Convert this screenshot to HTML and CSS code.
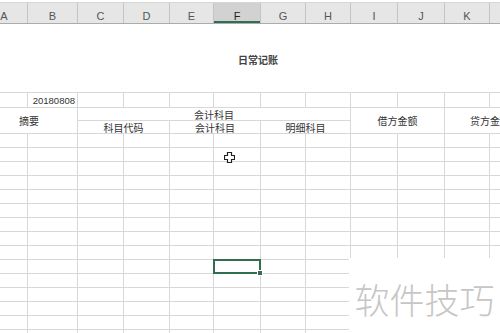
FILE: index.html
```html
<!DOCTYPE html>
<html>

<head>
    <title>日常记账</title>
    <link rel="stylesheet" href="styles.css">
</head>

<body>
    <div class="topbar"></div>

    <div class="workbook">
        <!-- Column headers -->
        <div class="col-head">
            <div>A</div>
            <div>B</div>
            <div>C</div>
            <div>D</div>
            <div>E</div>
            <div class="active">F</div>
            <div>G</div>
            <div>H</div>
            <div>I</div>
            <div>J</div>
            <div>K</div>
            <div>L</div>
        </div>

        <!-- Sheet cells -->
        <div class="sheet" id="sheet">
            <!-- Row 1: title -->
            <div class="cell title">日常记账</div>

            <!-- Row 2: date -->
            <div class="cell"></div>
            <div class="cell number">20180808</div>
            <div class="cell"></div>
            <div class="cell"></div>
            <div class="cell"></div>
            <div class="cell"></div>
            <div class="cell"></div>
            <div class="cell"></div>
            <div class="cell"></div>
            <div class="cell"></div>
            <div class="cell"></div>
            <div class="cell"></div>

            <!-- Rows 3-4: table header -->
            <div class="cell label summary">摘要</div>
            <div class="cell label account">会计科目</div>
            <div class="cell label debit">借方金额</div>
            <div class="cell label credit">贷方金额</div>
            <div class="cell label code">科目代码</div>
            <div class="cell label subject">会计科目</div>
            <div class="cell label detail">明细科目</div>
        </div>
    </div>

    <!-- Mouse cursor -->
    <svg class="cursor" width="11" height="11" viewBox="0 0 11 11">
        <path d="M3.5 0.5h4v3h3v4h-3v3h-4v-3h-3v-4h3z" fill="#fff" stroke="#222" stroke-width="1.2" />
    </svg>

    <!-- Watermark -->
    <div class="watermark">软件技巧</div>

    <script>
        // Fill the empty body rows of the sheet
        const sheet = document.getElementById("sheet");
        const bodyRows = 15;
        const columns = 12;

        for (let r = 0; r < bodyRows; r++) {
            for (let c = 0; c < columns; c++) {
                const cell = document.createElement("div");
                cell.className = "cell";
                // Active cell is F14
                if (r === 9 && c === 5) {
                    cell.classList.add("selected");
                }
                sheet.appendChild(cell);
            }
        }
    </script>
</body>

</html>
```

FILE: styles.css
```css
/* Page */
body {
    margin: 0;
    width: 500px;
    height: 333px;
    overflow: hidden;
    position: relative;
    background-color: #fff;
    font-family: "Liberation Sans", "Noto Sans CJK SC", sans-serif;
    color: #333;
}

.topbar {
    height: 2px;
    border-bottom: 1px solid #d6d6d6;
}

/* Sheet starts a little left of the window, column A is cut */
.workbook {
    margin-left: -19px;
}

/* Column header bar */
.col-head {
    display: grid;
    grid-template-columns: 46px 49px 45px 45px 43px 46px 44px 44px 46px 46px 44px 45px;
    column-gap: 1px;
    background-color: #c4c4c4;
    border-bottom: 1px solid #acacac;
}
.col-head div {
    height: 20px;
    box-sizing: border-box;
    padding-top: 6px;
    line-height: 14px;
    font-size: 11px;
    text-align: center;
    color: #555;
    background-color: #e6e6e6;
}
.col-head .active {
    background-color: #d2d2d2;
    color: #222;
    box-shadow: inset 0 -2px 0 #2f6e50;
}

/* Grid of cells */
.sheet {
    display: grid;
    grid-template-columns: 46px 49px 45px 45px 43px 46px 44px 44px 46px 46px 44px 45px;
    grid-template-rows: 68px 14px 12px 12px;
    grid-auto-rows: 13px;
    gap: 1px;
    background-color: #d8d8d8;
}
.cell {
    background-color: #fff;
    font-size: 10px;
    display: flex;
    align-items: center;
    justify-content: center;
    white-space: nowrap;
}

.title {
    grid-column: 1 / -1;
    font-weight: bold;
    font-size: 10px;
    color: #444;
    padding-top: 3px;
}
.number {
    justify-content: flex-end;
    padding-right: 2px;
    font-size: 9.5px;
}

/* Merged header cells */
.summary {
    grid-column: 1 / 3;
    grid-row: 3 / 5;
}
.account {
    grid-column: 3 / 9;
    grid-row: 3;
}
.debit {
    grid-column: 9 / 11;
    grid-row: 3 / 5;
}
.credit {
    grid-column: 11 / 13;
    grid-row: 3 / 5;
}
.code {
    grid-column: 3 / 5;
    grid-row: 4;
}
.subject {
    grid-column: 5 / 7;
    grid-row: 4;
}
.detail {
    grid-column: 7 / 9;
    grid-row: 4;
}

/* Active cell */
.selected {
    position: relative;
    outline: 2px solid #2f6e50;
    outline-offset: -1px;
}
.selected::after {
    content: "";
    position: absolute;
    right: -3px;
    bottom: -3px;
    width: 4px;
    height: 4px;
    background-color: #2f6e50;
    border: 1px solid #fff;
}

/* Mouse pointer over the sheet */
.cursor {
    position: absolute;
    left: 224px;
    top: 152px;
}

/* Watermark box in the corner */
.watermark {
    position: absolute;
    left: 349px;
    top: 258px;
    right: 0;
    bottom: 0;
    background-color: #fff;
    display: flex;
    align-items: center;
    justify-content: center;
    padding-top: 6px;
    box-sizing: border-box;
    font-family: "Noto Sans CJK SC", sans-serif;
    font-weight: 300;
    font-size: 35px;
    letter-spacing: 0;
    color: #c6c6c6;
}
```
